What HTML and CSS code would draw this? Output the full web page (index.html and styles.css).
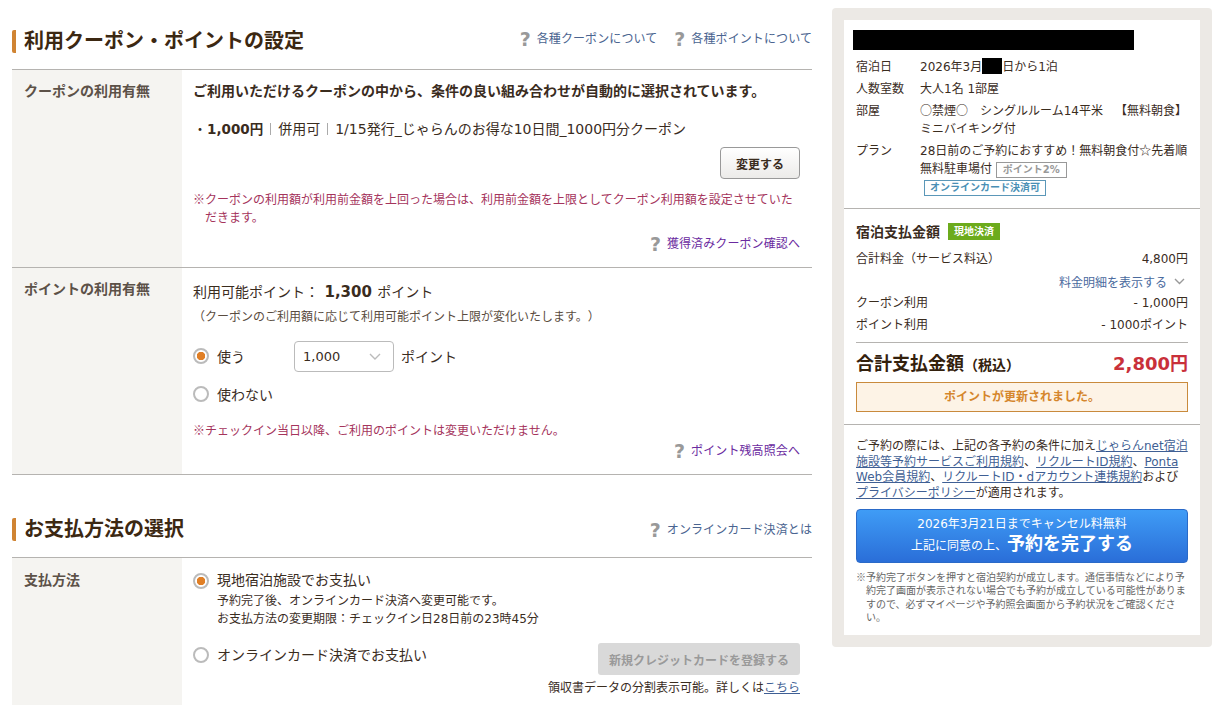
FILE: index.html
```html
<!DOCTYPE html>
<html lang="ja">
<head>
    <meta charset="utf-8">
    <link rel="stylesheet" href="styles.css">
</head>
<body>
    <div class="page">
        <div class="main">
            <div class="sec-head">
                <h2 class="sec-title">利用クーポン・ポイントの設定</h2>
                <div class="help-links up">
                    <a class="help"><span class="q">?</span>各種クーポンについて</a>
                    <a class="help"><span class="q">?</span>各種ポイントについて</a>
                </div>
            </div>
            <div class="row coupon-row">
                <div class="row-label">クーポンの利用有無</div>
                <div class="row-body">
                    <p class="lead">ご利用いただけるクーポンの中から、条件の良い組み合わせが自動的に選択されています。</p>
                    <p class="coupon-line">・<b class="num">1,000円</b><span class="sep"></span>併用可<span class="sep"></span>1/15発行_じゃらんのお得な10日間_1000円分クーポン</p>
                    <div class="btn-line"><button class="btn-change">変更する</button></div>
                    <p class="warn indent"><span class="cjk">※</span>クーポンの利用額が利用前金額を上回った場合は、利用前金額を上限としてクーポン利用額を設定させていただきます。</p>
                    <div class="link-line"><a class="help visited"><span class="q">?</span>獲得済みクーポン確認へ</a></div>
                </div>
            </div>
            <div class="row point-row">
                <div class="row-label">ポイントの利用有無</div>
                <div class="row-body">
                    <p class="avail">利用可能ポイント： <b class="num big">1,300</b> ポイント</p>
                    <p class="sub">（クーポンのご利用額に応じて利用可能ポイント上限が変化いたします。）</p>
                    <div class="use-line">
                        <span class="radio on"></span><span class="use-label">使う</span>
                        <div class="select">1,000<svg width="12" height="7" viewBox="0 0 12 7"><path d="M1 1l5 5 5-5" fill="none" stroke="#bbb" stroke-width="1.4"/></svg></div>
                        <span>ポイント</span>
                    </div>
                    <div class="nouse-line"><span class="radio"></span><span class="use-label">使わない</span></div>
                    <p class="warn"><span class="cjk">※</span>チェックイン当日以降、ご利用のポイントは変更いただけません。</p>
                    <div class="link-line"><a class="help visited"><span class="q">?</span>ポイント残高照会へ</a></div>
                </div>
            </div>

            <div class="sec-head second">
                <h2 class="sec-title">お支払方法の選択</h2>
                <div class="help-links">
                    <a class="help"><span class="q">?</span>オンラインカード決済とは</a>
                </div>
            </div>
            <div class="row pay-row">
                <div class="row-label">支払方法</div>
                <div class="row-body">
                    <div class="pay-opt">
                        <span class="radio on"></span>
                        <div>
                            <div class="pay-name">現地宿泊施設でお支払い</div>
                            <div class="pay-note">予約完了後、オンラインカード決済へ変更可能です。<br>お支払方法の変更期限：チェックイン日28日前の23時45分</div>
                        </div>
                    </div>
                    <div class="pay-opt card">
                        <span class="radio"></span>
                        <div class="pay-name">オンラインカード決済でお支払い</div>
                        <button class="btn-new">新規クレジットカードを登録する</button>
                    </div>
                    <div class="receipt">領収書データの分割表示可能。詳しくは<a class="ul">こちら</a></div>
                </div>
            </div>
        </div>

        <div class="side">
            <div class="side-inner">
                <div class="summary">
                    <div class="hotel-name"></div>
                    <dl class="info">
                        <dt>宿泊日</dt><dd>2026年3月<span class="mask"></span>日から1泊</dd>
                        <dt>人数室数</dt><dd>大人1名 1部屋</dd>
                        <dt>部屋</dt><dd><span class="cjk">○</span>禁煙<span class="cjk">○</span>　シングルルーム14平米　【無料朝食】ミニバイキング付</dd>
                        <dt>プラン</dt><dd>28日前のご予約におすすめ！無料朝食付<span class="cjk">☆</span>先着順無料駐車場付 <span class="tag gray">ポイント2%</span><br><span class="tag blue">オンラインカード決済可</span></dd>
                    </dl>
                </div>
                <div class="price">
                    <div class="price-title"><b>宿泊支払金額</b><span class="tag-green">現地決済</span></div>
                    <div class="price-row first"><span>合計料金（サービス料込）</span><span>4,800円</span></div>
                    <div class="detail-link">料金明細を表示する<svg width="11" height="7" viewBox="0 0 11 7"><path d="M1 1l4.500 4.500L10 1" fill="none" stroke="#999" stroke-width="1.4"/></svg></div>
                    <div class="price-row"><span>クーポン利用</span><span>- 1,000円</span></div>
                    <div class="price-row"><span>ポイント利用</span><span>- 1000ポイント</span></div>
                    <div class="total"><span class="total-label">合計支払金額<small>（税込）</small></span><span class="total-num">2,800円</span></div>
                    <div class="notice">ポイントが更新されました。</div>
                </div>
                <div class="agree">
                    <p class="terms">ご予約の際には、上記の各予約の条件に加え<a class="ul">じゃらんnet宿泊施設等予約サービスご利用規約</a>、<a class="ul">リクルートID規約</a>、<a class="ul">Ponta Web会員規約</a>、<a class="ul">リクルートID・dアカウント連携規約</a>および<a class="ul">プライバシーポリシー</a>が適用されます。</p>
                    <button class="btn-done">
                        <span class="done-top">2026年3月21日までキャンセル料無料</span>
                        <span class="done-main">上記に同意の上、<b>予約を完了する</b></span>
                    </button>
                    <p class="small-note"><span class="cjk">※</span>予約完了ボタンを押すと宿泊契約が成立します。通信事情などにより予約完了画面が表示されない場合でも予約が成立している可能性がありますので、必ずマイページや予約照会画面から予約状況をご確認ください。</p>
                </div>
            </div>
        </div>
    </div>
</body>
</html>
```

FILE: styles.css
```css
* {
    box-sizing: border-box;
}

html, body {
    margin: 0;
    height: 705px;
    overflow: hidden;
}

body {
    background: #fff;
    color: #3a2c1e;
    font-family: "DejaVu Sans", "Noto Sans CJK JP", sans-serif;
    font-size: 14px;
    text-spacing-trim: space-all;
}

p {
    margin: 0;
}

.cjk {
    font-family: "Noto Sans CJK JP", sans-serif;
    line-height: 1;
}

.page {
    display: flex;
    align-items: flex-start;
    gap: 20px;
    padding: 8px 7px 0 12px;
}

.main {
    width: 800px;
    flex: none;
}

.sec-head {
    display: flex;
    justify-content: space-between;
    align-items: center;
    height: 62px;
    padding: 14px 0 8px;
    border-bottom: 1px solid #b5b3b0;
}

.sec-head.second {
    height: 83px;
    padding: 36px 0 9px;
}

.sec-title {
    margin: 0;
    padding-left: 8px;
    border-left: 4px solid #d08433;
    border-radius: 2px;
    font-size: 20px;
    line-height: 23px;
    font-weight: 700;
    color: #3c2812;
}

.help-links {
    display: flex;
    gap: 17px;
}

.help-links.up {
    margin-bottom: 6px;
}

.help {
    display: inline-flex;
    align-items: center;
    color: #4a6490;
    font-size: 12px;
    line-height: 18px;
    letter-spacing: 0.100px;
}

.help.visited {
    color: #6a2aa0;
}

.q {
    width: 17px;
    font-size: 19px;
    font-weight: 700;
    color: #999;
}

.row {
    display: flex;
    border-bottom: 1px solid #b5b3b0;
}

.coupon-row {
    height: 198px;
}

.point-row {
    height: 207px;
}

.pay-row {
    height: 160px;
    border-bottom: 0;
}

.row-label {
    width: 170px;
    flex: none;
    padding: 11px 12px 0;
    background: #f5f4f1;
    font-size: 14px;
    line-height: 20px;
    font-weight: 700;
    color: #5c5148;
}

.row-body {
    flex: 1;
    padding: 11px 12px 0 11px;
}

.pay-row .row-label,
.pay-row .row-body {
    padding-top: 12px;
}

.lead {
    line-height: 20px;
    font-weight: 700;
}

.coupon-line {
    margin-top: 18px;
    line-height: 20px;
}

.num {
    font-size: 13.500px;
}

.big {
    margin: 0 1px;
    font-size: 15px;
}

.sep {
    display: inline-block;
    height: 12px;
    margin: 0 7px;
    border-left: 1px solid #aaa;
    vertical-align: -1px;
}

.btn-line {
    display: flex;
    justify-content: flex-end;
    margin-top: 8px;
}

.btn-change {
    width: 80px;
    height: 32px;
    padding: 0;
    border: 1px solid #999;
    border-radius: 4px;
    background: linear-gradient(#fff, #ecebe9);
    font: 700 12px "Noto Sans CJK JP", sans-serif;
    color: #3a2c1e;
}

.warn {
    margin-top: 12px;
    font-size: 12px;
    line-height: 18px;
    color: #a5345c;
}

.indent {
    padding-left: 12px;
    text-indent: -12px;
}

.link-line {
    display: flex;
    justify-content: flex-end;
    margin-top: 8px;
}

.avail {
    margin-top: 2px;
    line-height: 22px;
}

.sub {
    margin-top: 5px;
    font-size: 12px;
    line-height: 18px;
    color: #5a4c40;
}

.use-line {
    display: flex;
    align-items: center;
    height: 32px;
    margin-top: 14px;
}

.radio {
    flex: none;
    width: 16px;
    height: 16px;
    border: 2px solid #bbb;
    border-radius: 50%;
    background: #fff;
}

.radio.on {
    background: radial-gradient(circle, #e07f26 0 4px, #fff 4.500px);
}

.use-label {
    margin-left: 8px;
}

.select {
    display: flex;
    align-items: center;
    justify-content: space-between;
    width: 100px;
    height: 31px;
    margin: 0 7px 0 49px;
    padding: 0 12px 0 8px;
    border: 1px solid #bbb;
    border-radius: 4px;
    font-size: 13px;
}

.nouse-line {
    display: flex;
    align-items: center;
    height: 22px;
    margin-top: 11px;
}

.point-row .warn {
    margin-top: 17px;
}

.point-row .link-line {
    margin-top: 2px;
}

.pay-opt {
    display: flex;
    gap: 8px;
    align-items: flex-start;
}

.pay-opt .radio {
    margin-top: 3px;
}

.pay-name {
    line-height: 20px;
}

.pay-note {
    font-size: 12px;
    line-height: 18px;
    margin-top: 2px;
}

.pay-opt.card {
    margin-top: 15px;
}

.card .radio {
    margin-top: 4px;
}

.card .pay-name {
    margin-top: 2px;
}

.btn-new {
    width: 202px;
    height: 32px;
    margin-left: auto;
    padding: 0;
    border: 0;
    border-radius: 3px;
    background: #d9d9d9;
    font: 700 12px "Noto Sans CJK JP", sans-serif;
    color: #9a9a9a;
}

.receipt {
    margin-top: 4px;
    text-align: right;
    font-size: 12px;
    line-height: 18px;
}

.ul {
    color: #3f5f94;
    text-decoration: underline;
}

.side {
    width: 380px;
    flex: none;
    padding: 12px;
    border-radius: 4px;
    background: #ece9e5;
}

.side-inner {
    height: 615px;
    background: #fff;
}

.summary {
    height: 189px;
    padding: 10px 12px 0 9px;
    border-bottom: 1px solid #b5b3b0;
}

.hotel-name {
    width: 281px;
    height: 20px;
    background: #000;
}

.info {
    display: grid;
    grid-template-columns: 64px 1fr;
    row-gap: 4px;
    margin: 8px 0 0;
    padding-left: 3px;
    font-size: 12px;
    line-height: 18px;
}

.info dt,
.info dd {
    margin: 0;
}

.mask {
    display: inline-block;
    width: 20px;
    height: 16px;
    background: #000;
    vertical-align: -3px;
}

.tag {
    display: inline-block;
    height: 16px;
    padding: 0 6px;
    border: 1px solid #999;
    font-size: 10px;
    line-height: 14px;
    font-weight: 700;
    color: #999;
}

.tag.blue {
    margin: 1px 0 0 4px;
    padding: 0 5px;
    border-color: #5b97b8;
    color: #4a8fb5;
}

.price {
    height: 216px;
    padding: 13px 12px 0;
    border-bottom: 1px solid #b5b3b0;
}

.price-title {
    display: flex;
    align-items: center;
    gap: 8px;
    height: 18px;
    font-size: 14px;
}

.tag-green {
    padding: 0 6px;
    background: #6cab1c;
    color: #fff;
    font-size: 10px;
    line-height: 17px;
    font-weight: 700;
}

.price-row {
    display: flex;
    justify-content: space-between;
    margin-top: 4px;
    font-size: 12px;
    line-height: 18px;
}

.price-row.first {
    margin-top: 10px;
}

.detail-link {
    display: flex;
    justify-content: flex-end;
    align-items: center;
    gap: 7px;
    height: 18px;
    margin-top: 4px;
    padding-right: 3px;
    color: #4a6a9e;
    font-size: 12px;
}

.total {
    display: flex;
    justify-content: space-between;
    align-items: center;
    height: 40px;
    margin-top: 8px;
    padding-bottom: 2px;
    border-top: 1px solid #b5b3b0;
}

.total-label {
    font-size: 18px;
    font-weight: 700;
    color: #33200c;
}

.total-label small {
    font-size: 14px;
}

.total-num {
    font-size: 18px;
    font-weight: 700;
    color: #c9303a;
}

.notice {
    height: 30px;
    border: 1px solid #c98a3c;
    background: #fdf3e6;
    text-align: center;
    color: #d5862c;
    font-size: 12px;
    font-weight: 700;
    line-height: 28px;
}

.agree {
    padding: 14px 12px 0;
}

.terms {
    font-size: 12px;
    line-height: 15.700px;
    word-break: break-all;
}

.btn-done {
    display: block;
    width: 100%;
    height: 54px;
    margin-top: 7px;
    padding: 0 0 2px;
    border: 1px solid #2a6ac8;
    border-radius: 4px;
    background: linear-gradient(#3f9cf6, #2a6ed8);
    font-family: "DejaVu Sans", "Noto Sans CJK JP", sans-serif;
    color: #fff;
}

.done-top {
    display: block;
    font-size: 12px;
    line-height: 20px;
}

.done-main {
    display: block;
    font-size: 12px;
    line-height: 20px;
}

.done-main b {
    font-size: 18px;
}

.small-note {
    margin-top: 8px;
    padding-left: 10px;
    text-indent: -10px;
    font-size: 10px;
    line-height: 13.500px;
    color: #666;
}
```
